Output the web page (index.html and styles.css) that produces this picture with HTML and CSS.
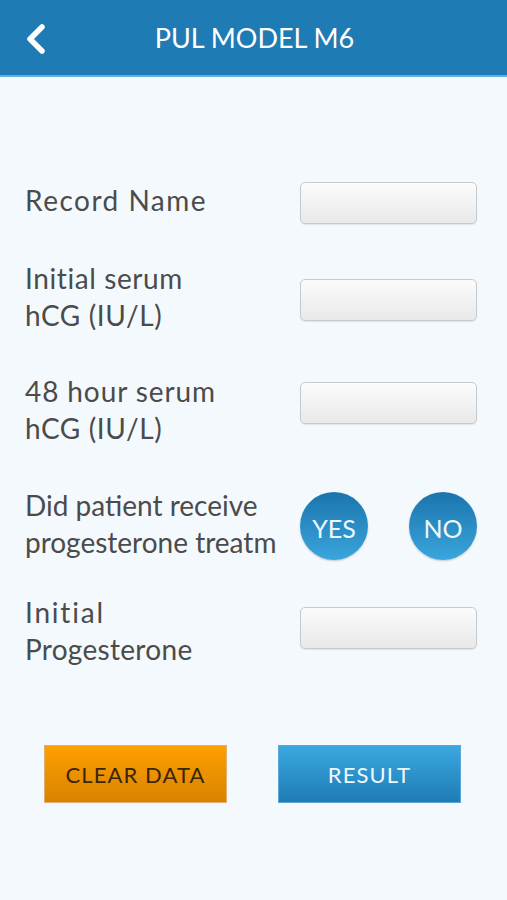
FILE: index.html
```html
<!DOCTYPE html>
<html>
<head>
<meta charset="utf-8">
<link rel="stylesheet" href="styles.css">
</head>
<body>
<header class="topbar">
  <svg class="back" width="24" height="32" viewBox="0 0 24 32"><polyline points="18,4 6,16 18,28" fill="none" stroke="#fff" stroke-width="5.5" stroke-linecap="round" stroke-linejoin="round"/></svg>
  <h1 class="title">PUL MODEL M6</h1>
</header>
<main class="form">
  <div class="row row-1">
    <div class="label"><span class="sp-15">Record Name</span></div>
    <div class="field"></div>
  </div>
  <div class="row row-2">
    <div class="label"><span class="sp-06">Initial serum</span><br><span class="sp-06">hCG (IU/L)</span></div>
    <div class="field"></div>
  </div>
  <div class="row row-3">
    <div class="label"><span class="sp-09">48 hour serum</span><br><span class="sp-06">hCG (IU/L)</span></div>
    <div class="field"></div>
  </div>
  <div class="row row-4">
    <div class="label">Did patient receive<br>progesterone treatm</div>
    <div class="choices">
      <div class="circle">YES</div>
      <div class="circle">NO</div>
    </div>
  </div>
  <div class="row row-5">
    <div class="label"><span class="sp-17">Initial</span><br><span class="sp-03">Progesterone</span></div>
    <div class="field"></div>
  </div>
  <div class="actions">
    <div class="btn btn-clear">CLEAR DATA</div>
    <div class="btn btn-result">RESULT</div>
  </div>
</main>
</body>
</html>
```
FILE: styles.css
```css
html, body {
  margin: 0;
  padding: 0;
}
body {
  background: #f4f9fd;
  font-family: Lato, "Open Sans", sans-serif;
  width: 507px;
  height: 900px;
  overflow: hidden;
}
.topbar {
  height: 77px;
  background: #1f7bb4;
  border-bottom: 2px solid #5fb0de;
  box-sizing: border-box;
  display: flex;
  align-items: center;
  justify-content: center;
  position: relative;
}
.back {
  position: absolute;
  left: 24px;
  top: 23px;
}
.title {
  margin: 0 0 0 2px;
  color: #fff;
  font-weight: 400;
  font-size: 27px;
}
.form {
  padding: 105px 30px 0 25px;
}
.row {
  display: flex;
  align-items: flex-start;
  justify-content: space-between;
}
.row-2 { margin-top: 36px; }
.row-3 { margin-top: 39px; }
.row-4 { margin-top: 40px; }
.row-5 { margin-top: 33px; }
.row-2 .field { margin-top: 19px; }
.row-3 .field { margin-top: 9px; }
.row-4 .choices { margin-top: 5px; }
.row-5 .field { margin-top: 13px; }
.label {
  font-size: 28px;
  line-height: 37px;
  color: #4b4b4b;
  white-space: nowrap;
}
.sp-15 { letter-spacing: 1.5px; }
.sp-17 { letter-spacing: 1.8px; }
.sp-09 { letter-spacing: 0.9px; }
.sp-06 { letter-spacing: 0.6px; }
.sp-03 { letter-spacing: 0.3px; }
.field {
  width: 177px;
  height: 42px;
  box-sizing: border-box;
  border: 1px solid #c3cbd1;
  border-radius: 5px;
  background: linear-gradient(#fbfbfb, #e9e9e9);
  box-shadow: 0 1px 1px rgba(0,0,0,0.08);
}
.choices {
  display: flex;
  gap: 41px;
}
.circle {
  width: 68px;
  height: 68px;
  border-radius: 50%;
  background: linear-gradient(#1b74ad, #3aa5dc);
  color: #eef7fc;
  font-size: 25px;
  display: flex;
  align-items: center;
  justify-content: center;
  box-shadow: 0 1px 2px rgba(0,0,0,0.2);
  padding-top: 3px;
  box-sizing: border-box;
}
.actions {
  display: flex;
  justify-content: space-between;
  margin-top: 77px;
  padding: 0 16px 0 19px;
}
.btn {
  width: 183px;
  height: 58px;
  box-sizing: border-box;
  display: flex;
  align-items: center;
  justify-content: center;
  font-size: 22px;
  letter-spacing: 1.1px;
}
.btn-clear {
  background: linear-gradient(#ffa000, #d98200);
  border: 1px solid #e0b070;
  color: #3b2508;
}
.btn-result {
  background: linear-gradient(#3ba8e0, #1f7cb6);
  border: 1px solid #5ba7d6;
  color: #f1f8fd;
}
```
